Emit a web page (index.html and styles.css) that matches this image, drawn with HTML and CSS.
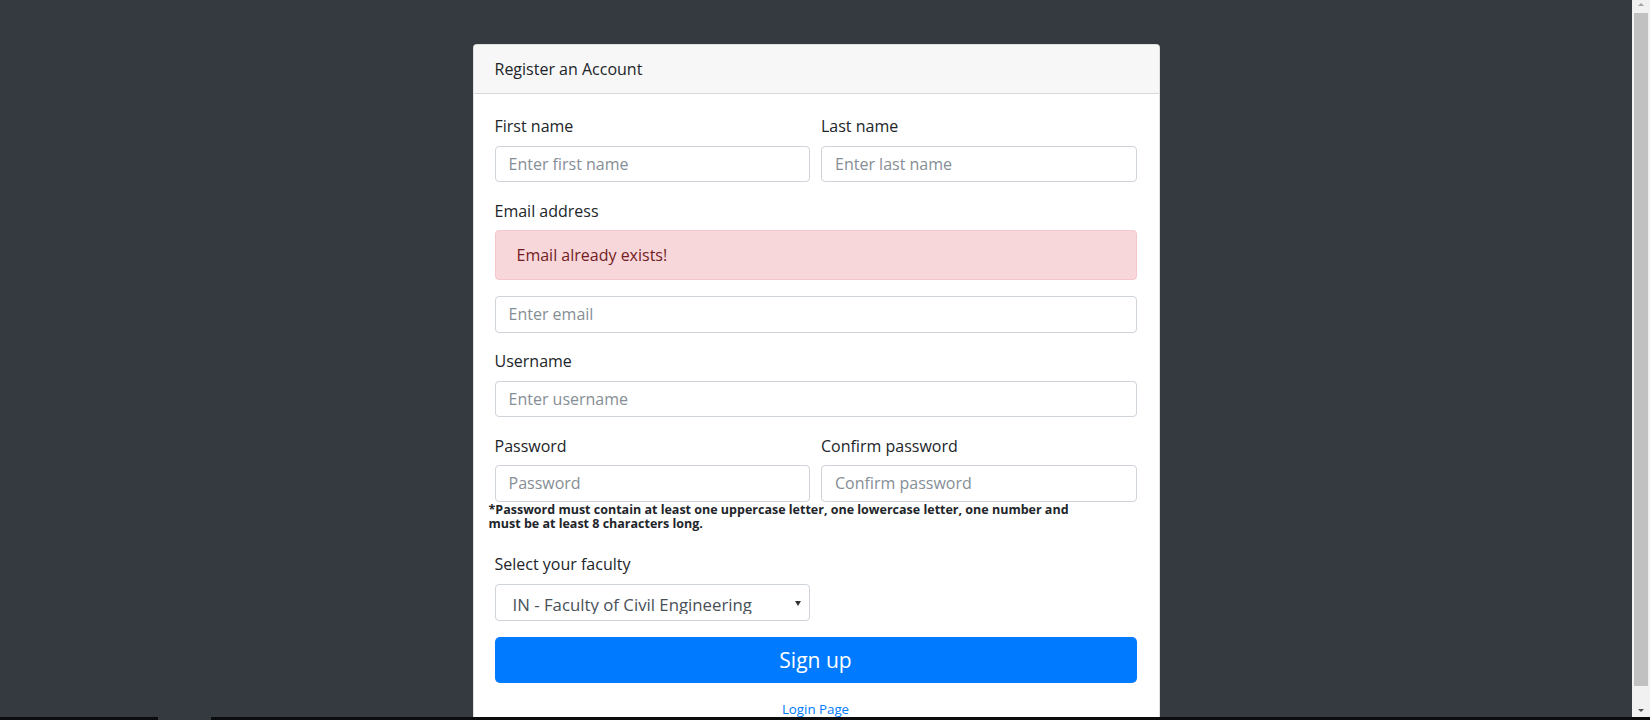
FILE: index.html
```html
<!DOCTYPE html>
<html lang="en">
<head>
<meta charset="utf-8">
<title>Register an Account</title>
<link rel="stylesheet" href="styles.css">
</head>
<body>
<div class="page">
  <div class="card">
    <div class="card-header">Register an Account</div>
    <form class="card-body">
      <div class="form-row">
        <div class="form-group">
          <label>First name</label>
          <input class="form-control" type="text" placeholder="Enter first name">
        </div>
        <div class="form-group">
          <label>Last name</label>
          <input class="form-control" type="text" placeholder="Enter last name">
        </div>
      </div>
      <div class="form-group">
        <label>Email address</label>
        <div class="alert">Email already exists!</div>
        <input class="form-control" type="email" placeholder="Enter email">
      </div>
      <div class="form-group">
        <label>Username</label>
        <input class="form-control" type="text" placeholder="Enter username">
      </div>
      <div class="form-row form-row-tight">
        <div class="form-group">
          <label>Password</label>
          <input class="form-control" type="password" placeholder="Password">
        </div>
        <div class="form-group">
          <label>Confirm password</label>
          <input class="form-control" type="password" placeholder="Confirm password">
        </div>
      </div>
      <small class="note">*Password must contain at least one uppercase letter, one lowercase letter, one number and<br>must be at least 8 characters long.</small>
      <div class="form-group half">
        <label>Select your faculty</label>
        <div class="select">
          <span class="select-text">IN - Faculty of Civil Engineering</span>
          <span class="select-arrow"></span>
        </div>
      </div>
      <button class="btn" type="button">Sign up</button>
      <div class="login"><a href="#">Login Page</a></div>
    </form>
  </div>
</div>
<div class="scrollbar">
  <span class="sb-up"></span>
  <span class="sb-thumb"></span>
  <span class="sb-down"></span>
</div>
<div class="bottom-line"><span class="bottom-gap"></span></div>
</body>
</html>
```
FILE: styles.css
```css
html, body {
  margin: 0;
  height: 100%;
  overflow: hidden;
}
body {
  background: #343a40;
  font-family: "Open Sans", "Noto Sans", sans-serif;
  color: #212529;
  font-size: 16px;
}
.page {
  width: calc(100% - 18px);
  padding-top: 44px;
  display: flex;
  justify-content: center;
}
.card {
  width: 687px;
  box-sizing: border-box;
  background: #fff;
  border: 1px solid rgba(0,0,0,.125);
  border-radius: 4px;
}
.card-header {
  background: #f7f7f7;
  border-bottom: 1px solid rgba(0,0,0,.125);
  padding: 12px 21px;
  line-height: 24px;
  font-size: 16px;
  border-radius: 4px 4px 0 0;
}
.card-body {
  padding: 20px 22px 40px 21px;
  display: flex;
  flex-direction: column;
}
.form-row {
  display: grid;
  grid-template-columns: 1fr 1fr;
  column-gap: 11px;
}
.form-group {
  display: flex;
  flex-direction: column;
  margin-bottom: 16.5px;
}
.form-row-tight .form-group {
  margin-bottom: 0;
}
.form-group label {
  line-height: 24px;
  margin-bottom: 7.5px;
  font-size: 16px;
}
.form-control {
  box-sizing: border-box;
  height: 36.5px;
  padding: 0 13px;
  border: 1px solid #ced4da;
  border-radius: 4px;
  font-family: inherit;
  font-size: 16px;
  color: #495057;
  background: #fff;
  outline: none;
}
.form-control::placeholder {
  color: #868e96;
}
.alert {
  box-sizing: border-box;
  height: 50px;
  padding: 0 21px;
  display: flex;
  align-items: center;
  background: #f8d7da;
  border: 1px solid #f5c6cb;
  color: #721c24;
  border-radius: 4px;
  margin-bottom: 16px;
  font-size: 16px;
}
.note {
  display: block;
  margin: 1.5px 0 21px -6px;
  font-size: 12.5px;
  font-weight: 700;
  line-height: 14px;
  color: #212529;
}
.half {
  width: 315.5px;
  margin-bottom: 16.5px;
}
.select {
  position: relative;
  box-sizing: border-box;
  height: 37px;
  border: 1px solid #ced4da;
  border-radius: 4px;
  background: #fff;
}
.select-text {
  display: block;
  box-sizing: border-box;
  height: 29.5px;
  overflow: hidden;
  padding: 9px 0 0 17px;
  font-size: 16.8px;
  line-height: 1.36;
  color: #495057;
}
.select-arrow {
  position: absolute;
  right: 8px;
  top: 16px;
  width: 0;
  height: 0;
  border-left: 3px solid transparent;
  border-right: 3px solid transparent;
  border-top: 5px solid #333;
}
.btn {
  height: 46px;
  border: 0;
  border-radius: 5px;
  background: #007bff;
  color: #fff;
  font-family: inherit;
  font-size: 21px;
  cursor: pointer;
}
.login {
  margin-top: 16.5px;
  line-height: 19px;
  text-align: center;
  font-size: 13.3px;
}
.login a {
  color: #007bff;
  text-decoration: none;
}
.scrollbar {
  position: fixed;
  top: 0;
  right: 0;
  width: 18px;
  height: 100%;
  background: #f1f1f1;
}
.sb-thumb {
  position: absolute;
  left: 2px;
  right: 2px;
  top: 13px;
  bottom: 34px;
  background: #c1c1c1;
}
.sb-up {
  position: absolute;
  top: 3px;
  left: 6px;
  border-left: 3px solid transparent;
  border-right: 3px solid transparent;
  border-bottom: 3px solid #a3a3a3;
}
.sb-down {
  position: absolute;
  bottom: 8px;
  left: 6px;
  border-left: 3px solid transparent;
  border-right: 3px solid transparent;
  border-top: 3px solid #505050;
}
.bottom-line {
  position: fixed;
  left: 0;
  right: 0;
  bottom: 0;
  height: 3px;
  background: #0b0c0e;
}
.bottom-gap {
  position: absolute;
  left: 158px;
  width: 53px;
  top: 0;
  bottom: 0;
  background: #343a40;
}
```
